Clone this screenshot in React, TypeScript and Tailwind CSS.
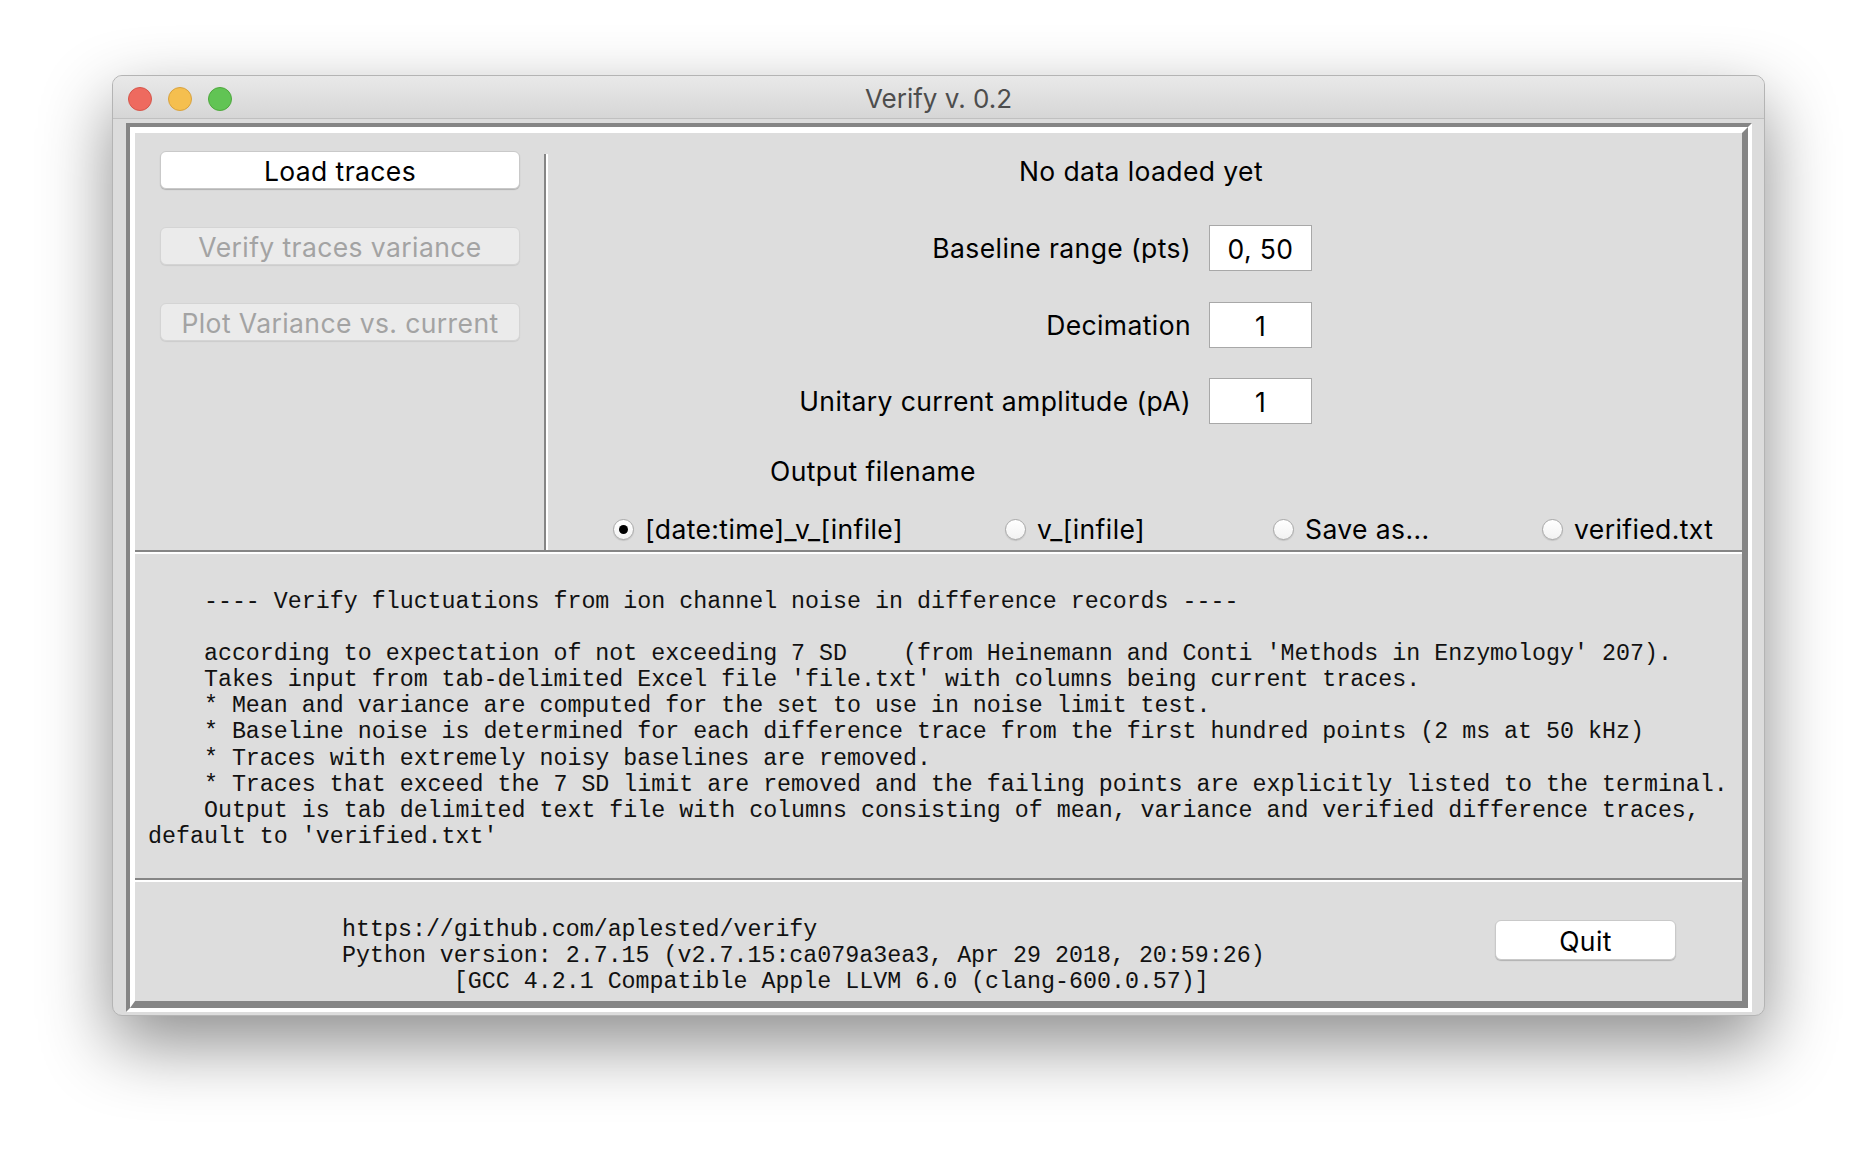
import React from "react";

const description = [
  "    ---- Verify fluctuations from ion channel noise in difference records ----",
  "",
  "    according to expectation of not exceeding 7 SD    (from Heinemann and Conti 'Methods in Enzymology' 207).",
  "    Takes input from tab-delimited Excel file 'file.txt' with columns being current traces.",
  "    * Mean and variance are computed for the set to use in noise limit test.",
  "    * Baseline noise is determined for each difference trace from the first hundred points (2 ms at 50 kHz)",
  "    * Traces with extremely noisy baselines are removed.",
  "    * Traces that exceed the 7 SD limit are removed and the failing points are explicitly listed to the terminal.",
  "    Output is tab delimited text file with columns consisting of mean, variance and verified difference traces,",
  "default to 'verified.txt'",
].join("\n");

const about = [
  "https://github.com/aplested/verify",
  "Python version: 2.7.15 (v2.7.15:ca079a3ea3, Apr 29 2018, 20:59:26)",
  "        [GCC 4.2.1 Compatible Apple LLVM 6.0 (clang-600.0.57)]",
].join("\n");

const fields = [
  { label: "Baseline range (pts)", value: "0, 50", gap: "mt-[38px]" },
  { label: "Decimation", value: "1", gap: "mt-[31px]" },
  { label: "Unitary current amplitude (pA)", value: "1", gap: "mt-[30px]" },
];

const outputs = [
  { label: "[date:time]_v_[infile]", checked: true },
  { label: "v_[infile]", checked: false },
  { label: "Save as...", checked: false },
  { label: "verified.txt", checked: false },
];

const Radio = ({ label, checked }: { label: string; checked: boolean }) => (
  <div className="flex items-center gap-[11px]">
    <span className="w-[21px] h-[21px] rounded-full bg-gradient-to-b from-white to-[#f2f2f2] border border-[#a9a9a9] shadow-[0_1px_1px_rgba(0,0,0,0.12)] flex items-center justify-center">
      {checked && <span className="w-[9px] h-[9px] rounded-full bg-black" />}
    </span>
    <span>{label}</span>
  </div>
);

const TkButton = ({ label, disabled }: { label: string; disabled?: boolean }) => (
  <button
    type="button"
    className={
      disabled
        ? "w-[360px] h-[38px] pt-[3px] rounded-[6px] bg-[#ebebeb] border border-[#d4d4d4] shadow-[0_1px_1px_rgba(0,0,0,0.08)] text-[#a3a3a3] leading-none"
        : "w-[360px] h-[38px] pt-[3px] rounded-[6px] bg-white border border-[#c9c9c9] shadow-[0_1px_1px_rgba(0,0,0,0.2)] text-black leading-none"
    }
  >
    {label}
  </button>
);

export default function App() {
  return (
    <div className="min-h-screen bg-white pl-[112px] pt-[75px] font-[Inter,'Liberation_Sans',sans-serif] text-[26.5px] tracking-[0.4px]">
      <div className="w-[1653px] rounded-[10px] overflow-hidden border border-[#b4b4b4] bg-[#dcdcdc] shadow-[0_28px_70px_rgba(0,0,0,0.45)]">
        {/* title bar */}
        <div className="h-[43px] pt-[4px] grid grid-cols-[1fr_auto_1fr] items-center border-b border-[#c0c0c0] bg-gradient-to-b from-[#e9e9e9] to-[#d6d6d6]">
          <div className="flex items-center gap-[16px] pl-[15px]">
            <span className="w-[24px] h-[24px] rounded-full bg-[#ee6a5f] border border-[#d5564b]" />
            <span className="w-[24px] h-[24px] rounded-full bg-[#f5bf4f] border border-[#d8a23f]" />
            <span className="w-[24px] h-[24px] rounded-full bg-[#61c454] border border-[#4ea83d]" />
          </div>
          <div className="text-[#4d4d4d] text-[26px] tracking-normal leading-none">Verify v. 0.2</div>
          <div />
        </div>

        {/* body */}
        <div className="pt-[4px] pl-[13px] pr-[12px] pb-[3px]">
          <div className="border-4 border-t-[#858585] border-l-[#858585] border-r-white border-b-white">
            <div className="border-t-[6px] border-l-[5px] border-r-[6px] border-b-[7px] border-t-white border-l-white border-r-[#858585] border-b-[#858585] bg-[#dddddd] text-black">
              {/* top section */}
              <div className="flex">
                <div className="w-[409px] pl-[25px] pt-[18px] flex flex-col gap-[38px]">
                  <TkButton label="Load traces" />
                  <TkButton label="Verify traces variance" disabled />
                  <TkButton label="Plot Variance vs. current" disabled />
                </div>
                <div className="mt-[21px] w-[4px] border-l-2 border-r-2 border-l-[#858585] border-r-white" />
                <div className="flex-1 flex flex-col pb-[10px]">
                  <div className="mt-[22px] leading-[32px] text-center pr-[8px]">No data loaded yet</div>
                  {fields.map((f) => (
                    <div key={f.label} className={`flex items-center ${f.gap}`}>
                      <span className="w-[643px] text-right leading-[32px]">{f.label}</span>
                      <span className="ml-[18px] w-[103px] h-[46px] pt-[3px] bg-white border border-[#a8a8a8] flex items-center justify-center leading-none">
                        {f.value}
                      </span>
                    </div>
                  ))}
                  <div className="mt-[31px] pl-[222px] leading-[32px]">Output filename</div>
                  <div className="mt-[23px] pl-[65px] h-[30px] grid grid-cols-[392px_268px_269px_auto] items-center">
                    {outputs.map((o) => (
                      <Radio key={o.label} label={o.label} checked={o.checked} />
                    ))}
                  </div>
                </div>
              </div>

              <div className="h-[4px] border-t-2 border-b-2 border-t-[#858585] border-b-white" />

              {/* description */}
              <div className="h-[324px] pt-[35px] pl-[13px] font-['Liberation_Mono',monospace] text-[23.3px] tracking-normal leading-[26.1px] whitespace-pre text-[#111]">
                {description}
              </div>

              <div className="h-[4px] border-t-2 border-b-2 border-t-[#858585] border-b-white" />

              {/* footer */}
              <div className="h-[119px] flex items-start">
                <div className="pl-[207px] pt-[35px] font-['Liberation_Mono',monospace] text-[23.3px] tracking-normal leading-[26.1px] whitespace-pre text-[#111]">
                  {about}
                </div>
                <button
                  type="button"
                  className="ml-auto mr-[66px] mt-[38px] w-[181px] h-[40px] pt-[3px] rounded-[6px] bg-white border border-[#c9c9c9] shadow-[0_1px_1px_rgba(0,0,0,0.2)] leading-none"
                >
                  Quit
                </button>
              </div>
            </div>
          </div>
        </div>
      </div>
    </div>
  );
}
